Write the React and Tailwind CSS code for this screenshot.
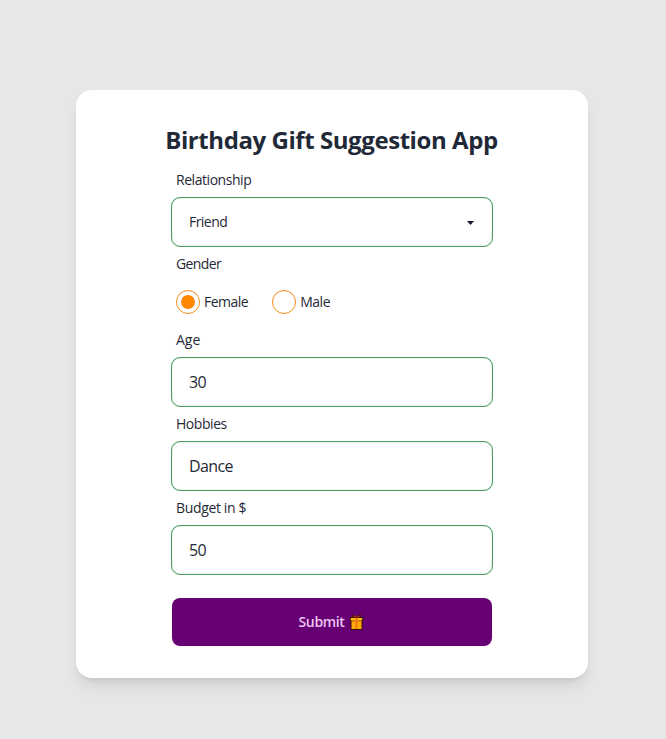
const fieldBox =
  'h-[50px] w-[322px] rounded-[9px] border border-[#4a9f5c] bg-white px-[17px] shadow-[inset_0_0_1px_#4a9f5c] outline-none';

function Label({ children, className = 'tracking-[-0.45px]' }) {
  return (
    <label className="flex h-9 shrink-0 items-center pl-[5px] text-sm">
      <span className={className}>{children}</span>
    </label>
  );
}

function TextField({ label, value, labelClass }) {
  return (
    <div className="flex h-[84px] flex-col">
      <Label className={labelClass}>{label}</Label>
      <div className={`${fieldBox} -mt-px flex shrink-0 items-center text-base tracking-[-0.6px]`}>
        <span>{value}</span>
      </div>
    </div>
  );
}

function Radio({ label, checked }) {
  return (
    <label className="flex items-center gap-1 text-sm tracking-[-0.5px]">
      <span className="flex size-6 items-center justify-center rounded-full border border-[#f28a1c]">
        {checked && <span className="size-3.5 rounded-full bg-[#ff8800]" />}
      </span>
      <span>{label}</span>
    </label>
  );
}

function Gift() {
  return (
    <svg width="15" height="16" viewBox="0 0 14 16">
      <path d="M7 3.500 3.500.8 3 4M7 3.500 10.500.8 11 4" fill="#c43b16" stroke="#4a1010" strokeWidth="1.200" />
      <path d="M1.500 6.500h11v9h-11z" fill="#ffa90a" stroke="#35100f" />
      <path d="M.7 3.500h12.600v3.300H.7z" fill="#ffb81a" stroke="#35100f" />
      <path d="M2 6.800h10" stroke="#f79a0a" strokeWidth="1.200" />
      <path d="M5.900 4h2.200v11H5.900z" fill="#ef7a10" />
      <path d="m7 4-2.500-2.200M7 4l2.500-2.200" stroke="#dc4a16" />
    </svg>
  );
}

export default function App() {
  return (
    <main className="flex h-[739px] w-full justify-center bg-[#e7e7e7] pt-[90px] pr-[2px] font-['Open_Sans','Noto_Sans',sans-serif] text-[#1f2937]">
      <section className="flex h-[588px] w-[512px] flex-col items-center rounded-2xl bg-white pt-8 shadow-lg">
        <h1 className="flex h-9 items-center pr-px text-2xl font-bold tracking-[-0.43px] whitespace-nowrap">Birthday Gift Suggestion App</h1>
        <form className="mt-1 flex w-[322px] flex-col">
          <div className="flex h-[84px] flex-col">
            <Label>Relationship</Label>
            <div className={`${fieldBox} -mt-px flex shrink-0 items-center justify-between text-sm tracking-[-0.55px]`}>
              <span>Friend</span>
              <svg className="mt-px mr-px" width="7" height="4" viewBox="0 0 7 4" fill="#111827">
                <path d="M0 0h7L3.500 4z" />
              </svg>
            </div>
          </div>
          <Label className="tracking-[-0.6px]">Gender</Label>
          <div className="flex h-10 items-center gap-6 pl-[5px]">
            <Radio label="Female" checked />
            <Radio label="Male" />
          </div>
          <TextField label="Age" labelClass="tracking-[0px]" value="30" />
          <TextField label="Hobbies" value="Dance" />
          <TextField label="Budget in $" labelClass="tracking-[-0.35px]" value="50" />
          <button className="mx-px mt-6 flex h-12 items-center justify-center gap-1 rounded-lg bg-[#670073] pr-0.5 text-sm font-semibold text-[#edc5f2]">
            <span className="tracking-[-0.35px]">Submit</span>
            <Gift />
          </button>
        </form>
      </section>
    </main>
  );
}
